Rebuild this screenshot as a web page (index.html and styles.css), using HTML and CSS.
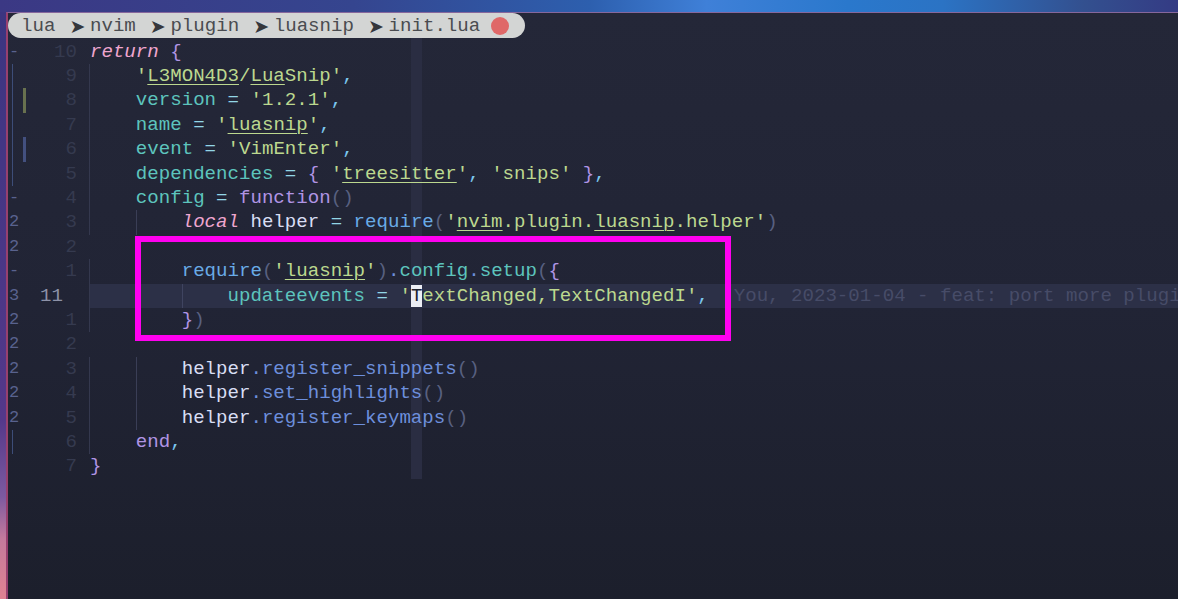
FILE: index.html
```
<!DOCTYPE html>
<html lang="en">
<head>
<meta charset="utf-8">
<title>init.lua</title>
<link rel="stylesheet" href="styles.css">
</head>
<body>
<main class="window">
  <nav class="crumbs">
    <span>lua</span><span class="chev">➤</span><span>nvim</span><span class="chev">➤</span><span>plugin</span><span class="chev">➤</span><span>luasnip</span><span class="chev">➤</span><span>init.lua</span><span class="dot"></span>
  </nav>
  <div class="column-hl"></div>
  <section class="code">
    <div class="row"><span class="sign">-</span><span class="num">10</span><span class="text"><i class="pink">return</i> <b class="pur">{</b></span></div>
    <div class="row g1"><span class="sign"><u class="bar-l"></u></span><span class="num">9</span><span class="text">    <b class="str">'<em>L3MON4D3</em>/<em>Lua</em>Snip'</b><b class="com">,</b></span></div>
    <div class="row g1"><span class="sign"><u class="bar-l"></u><u class="bar-olive"></u></span><span class="num">8</span><span class="text">    <b class="teal">version</b> <b class="op">=</b> <b class="str">'1.2.1'</b><b class="com">,</b></span></div>
    <div class="row g1"><span class="sign"><u class="bar-l"></u></span><span class="num">7</span><span class="text">    <b class="teal">name</b> <b class="op">=</b> <b class="str">'<em>luasnip</em>'</b><b class="com">,</b></span></div>
    <div class="row g1"><span class="sign"><u class="bar-l"></u><u class="bar-blue"></u></span><span class="num">6</span><span class="text">    <b class="teal">event</b> <b class="op">=</b> <b class="str">'VimEnter'</b><b class="com">,</b></span></div>
    <div class="row g1"><span class="sign"><u class="bar-l"></u></span><span class="num">5</span><span class="text">    <b class="teal">dependencies</b> <b class="op">=</b> <b class="pur">{</b> <b class="str">'<em>treesitter</em>'</b><b class="com">,</b> <b class="str">'snips'</b> <b class="pur">}</b><b class="com">,</b></span></div>
    <div class="row g1"><span class="sign">-</span><span class="num">4</span><span class="text">    <b class="teal">config</b> <b class="op">=</b> <b class="pur">function</b><b class="dim">()</b></span></div>
    <div class="row g1 g2"><span class="sign">2</span><span class="num">3</span><span class="text">        <i class="pink">local</i> <b class="wht">helper</b> <b class="op">=</b> <b class="blu">require</b><b class="dim">(</b><b class="str">'<em>nvim</em>.plugin.<em>luasnip</em>.helper'</b><b class="dim">)</b></span></div>
    <div class="row"><span class="sign">2</span><span class="num">2</span><span class="text"></span></div>
    <div class="row g1"><span class="sign">-</span><span class="num">1</span><span class="text">        <b class="blu">require</b><b class="dim">(</b><b class="str">'<em>luasnip</em>'</b><b class="dim">)</b><b class="meth">.</b><b class="teal">config</b><b class="meth">.</b><b class="teal">setup</b><b class="dim">(</b><b class="pur">{</b></span></div>
    <div class="row g1 current"><span class="sign">3</span><span class="num cur">11</span><span class="text"><s class="guide-cur"></s>            <b class="teal">updateevents</b> <b class="op">=</b> <b class="str">'</b><span class="cursor">T</span><b class="str">extChanged,TextChangedI'</b><b class="com">,</b>  <span class="blame">You, 2023-01-04 - feat: port more plugins</span></span></div>
    <div class="row g1"><span class="sign">2</span><span class="num">1</span><span class="text">        <b class="pur">}</b><b class="dim">)</b></span></div>
    <div class="row"><span class="sign">2</span><span class="num">2</span><span class="text"></span></div>
    <div class="row g1 g2"><span class="sign">2</span><span class="num">3</span><span class="text">        <b class="wht">helper</b><b class="meth">.register_snippets</b><b class="dim">()</b></span></div>
    <div class="row g1 g2"><span class="sign">2</span><span class="num">4</span><span class="text">        <b class="wht">helper</b><b class="meth">.set_highlights</b><b class="dim">()</b></span></div>
    <div class="row g1 g2"><span class="sign">2</span><span class="num">5</span><span class="text">        <b class="wht">helper</b><b class="meth">.register_keymaps</b><b class="dim">()</b></span></div>
    <div class="row g1"><span class="sign"><u class="bar-l"></u></span><span class="num">6</span><span class="text">    <b class="pur">end</b><b class="com">,</b></span></div>
    <div class="row"><span class="sign"></span><span class="num">7</span><span class="text"><b class="pur">}</b></span></div>
  </section>
  <div class="highlight-box"></div>
</main>
</body>
</html>
```
FILE: styles.css
```
* { box-sizing: border-box; }
html, body { margin: 0; height: 100%; }
body {
  width: 1178px;
  height: 599px;
  overflow: hidden;
  padding: 12px 0 0 6px;
  background:
    linear-gradient(90deg, #3b3884 0%, #35458f 30%, #2d5fae 50%, #3f80d8 60%, #2a78cc 72%, #2b73c4 80%, #33508f 92%, #343b84 100%) top / 100% 12px no-repeat,
    linear-gradient(180deg, #3a3580 0%, #54388a 70%, #7d5aa0 83%, #c47a9c 90%, #e08292 100%);
  font-family: "Liberation Mono", "DejaVu Sans Mono", monospace;
  font-size: 19.1px;
}
.window {
  position: relative;
  width: 1172px;
  height: 587px;
  border-top: 1px solid #86679c;
  border-left: 2px solid #98406f;
  background: linear-gradient(180deg, #242738 0%, #212435 50%, #1c1f2c 100%);
  overflow: hidden;
}
.crumbs {
  display: flex;
  align-items: center;
  width: 517px;
  height: 25px;
  padding: 1px 0 0 13px;
  border-radius: 12.5px;
  background: #d3d5d4;
  color: #4a4c50;
  white-space: pre;
}
.chev {
  width: 34.6px;
  padding-left: 14px;
  color: #35373c;
  font-family: "DejaVu Sans", sans-serif;
  font-size: 19px;
}
.dot {
  width: 18px;
  height: 18px;
  margin: -1px 0 0 11px;
  border-radius: 50%;
  background: #df6868;
}
.column-hl {
  position: absolute;
  left: 403px;
  top: 25px;
  width: 11px;
  height: 441px;
  background: #2a2d42;
}
.code {
  position: relative;
  padding-top: 1.5px;
  line-height: 24.42px;
}
.row {
  position: relative;
  display: grid;
  grid-template-columns: 13px 69px 1fr;
  height: 24.42px;
  white-space: pre;
}
.row.g1::before, .row.g2::after {
  content: "";
  position: absolute;
  top: 0;
  bottom: 0;
  width: 1px;
  background: #34384e;
}
.row.g1::before { left: 81px; }
.row.g2::after { left: 128px; background: #3a3e56; }
.row.current { background: linear-gradient(90deg, transparent 82px, #2c3047 82px); }
.sign {
  position: relative;
  padding-left: 1px;
  color: #59628e;
  font-size: 17px;
}
.sign u { position: absolute; display: block; }
.bar-l { left: 4px; top: 0; bottom: 0; width: 1px; background: #3d4d78; }
.bar-olive { left: 15px; top: 0; bottom: 0; width: 3px; background: #68714f; }
.bar-blue { left: 15px; top: 0; bottom: 0; width: 3px; background: #43507f; }
.num {
  padding-right: 13px;
  text-align: right;
  color: #353a4f;
}
.num.cur { padding-right: 27px; color: #8d92a8; }
.text { position: relative; color: #cdd6f4; }
.text b, .text i { font-weight: normal; }
.text em { font-style: normal; text-decoration: underline; text-underline-offset: 3px; text-decoration-thickness: 1px; }
.pink { color: #efa6cf; font-style: italic; }
.pur { color: #b094e4; }
.str { color: #bcd88f; }
.com { color: #7cc6ee; }
.teal { color: #5dc4bd; }
.op { color: #92d6e6; }
.dim { color: #586080; }
.wht { color: #d8def4; }
.blu { color: #69abe6; }
.meth { color: #6d8fdc; }
.blame { margin-left: 2px; color: #474c68; }
.cursor { background: #eceef4; color: #20232f; }
.guide-cur {
  position: absolute;
  left: 92px;
  top: 0;
  bottom: 0;
  width: 1px;
  background: #3f4460;
}
.highlight-box {
  position: absolute;
  left: 127px;
  top: 223px;
  width: 596px;
  height: 105px;
  border: 6px solid #ff00f0;
}
```
